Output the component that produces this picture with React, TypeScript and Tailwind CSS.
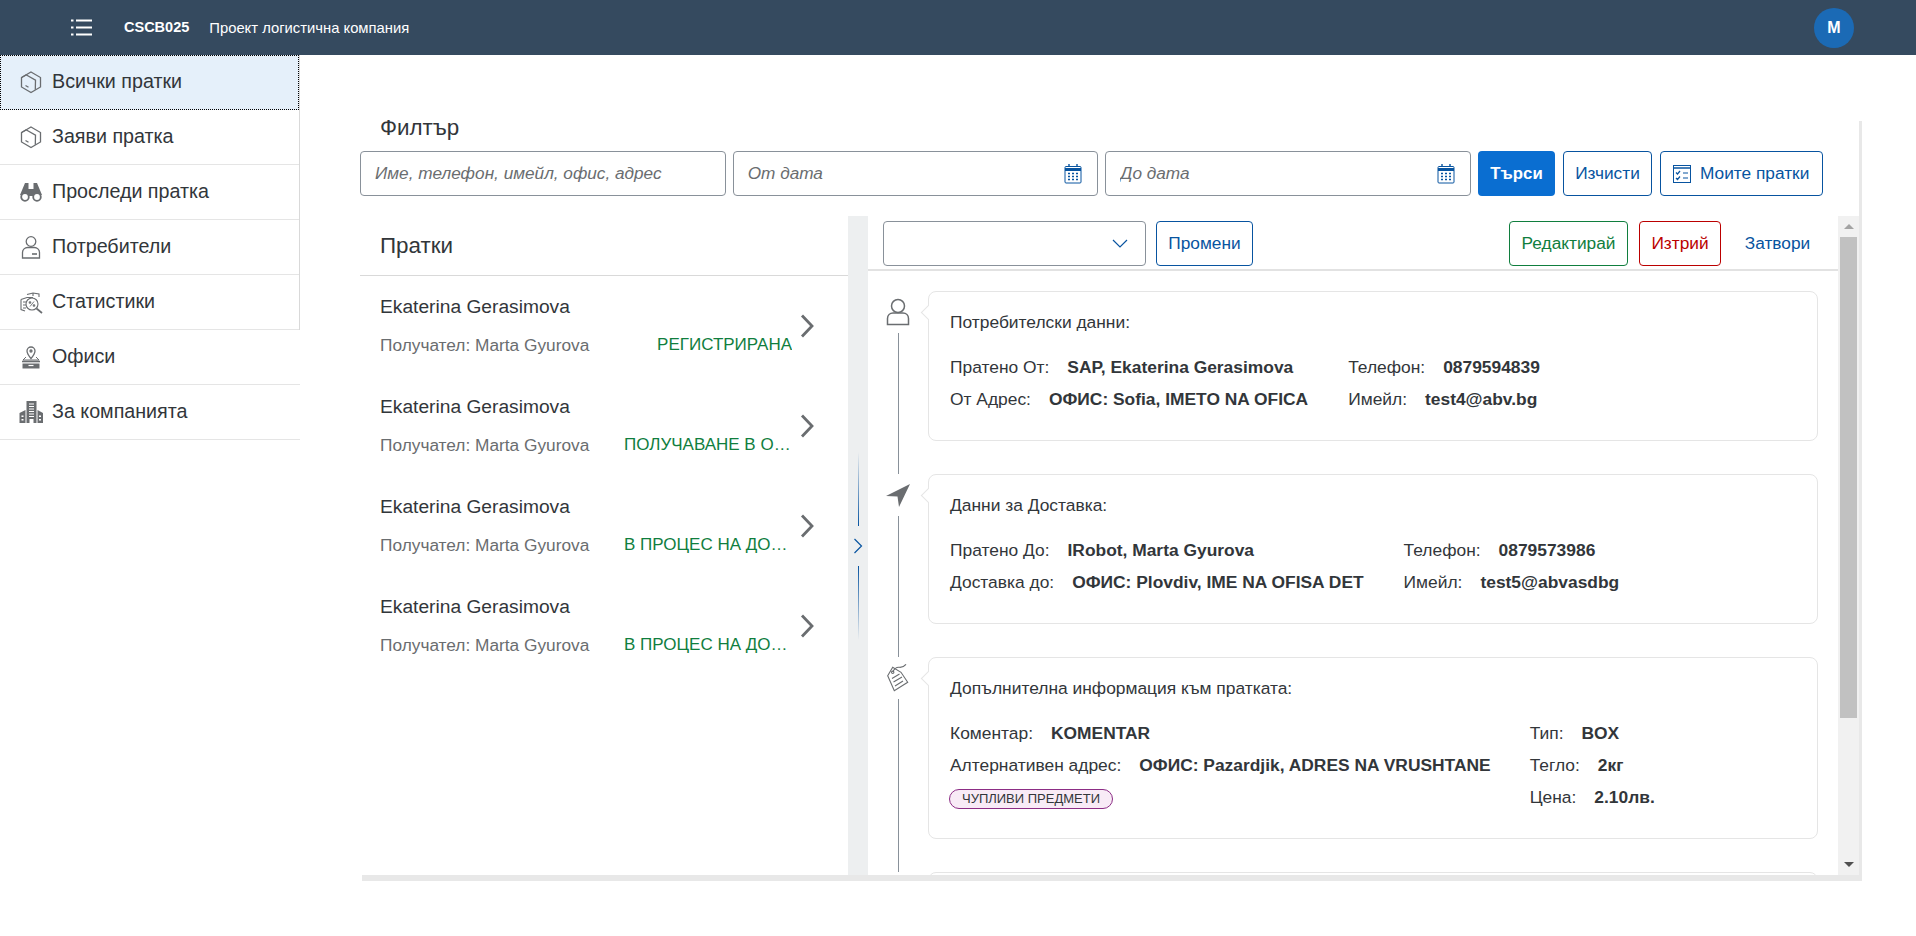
const NAV = [
  { label: "Всички пратки", icon: "box", active: true },
  { label: "Заяви пратка", icon: "box" },
  { label: "Проследи пратка", icon: "binoculars" },
  { label: "Потребители", icon: "user" },
  { label: "Статистики", icon: "stats" },
];
const NAV_BOTTOM = [
  { label: "Офиси", icon: "office" },
  { label: "За компанията", icon: "building" },
];

const SHIPMENTS = [
  "РЕГИСТРИРАНА",
  "ПОЛУЧАВАНЕ В ОФИС",
  "В ПРОЦЕС НА ДОСТАВКА",
  "В ПРОЦЕС НА ДОСТАВКА",
];

function NavIcon({ name }: { name: string }) {
  const common = { width: 24, height: 24, viewBox: "0 0 24 24", className: "shrink-0" };
  if (name === "box") {
    return (
      <svg {...common} fill="none" stroke="#6a6d70" strokeWidth="1.3">
        <path d="M12 2l9.5 5.5v9.5L12 22.5 2.5 17V7.5z" />
        <path d="M7 4.8l9.5 5.4-.2 9.5M2.7 7.5l4.5-2.6M6.5 15.5l3 1.7" />
      </svg>
    );
  }
  if (name === "binoculars") {
    return (
      <svg {...common} fill="#6a6d70">
        <path d="M6 3h3.5v6h5V3H18l5 12H1z" />
        <circle cx="6" cy="17" r="3.8" fill="#fff" stroke="#6a6d70" strokeWidth="1.800" />
        <circle cx="18" cy="17" r="3.8" fill="#fff" stroke="#6a6d70" strokeWidth="1.800" />
        <rect x="10" y="11" width="4" height="5" />
      </svg>
    );
  }
  if (name === "user") {
    return (
      <svg {...common} fill="none" stroke="#6a6d70" strokeWidth="1.3">
        <circle cx="12" cy="6.5" r="4.8" />
        <path d="M3.5 23v-5.5c0-3 2.5-5 5-5h7c2.5 0 5 2 5 5V23z" />
        <path d="M13 19h5" strokeWidth="1.6" />
      </svg>
    );
  }
  if (name === "stats") {
    return (
      <svg {...common} fill="none" stroke="#6a6d70" strokeWidth="1.1">
        <path d="M2 9.5l6-2h6M2 9.5v10l4 1.5M8 4.5l6-1.5 6 1v3M14 3v3" />
        <path d="M4 12h3M4 15h3M4 18h3" />
        <circle cx="13" cy="14" r="6" />
        <path d="M17.5 18.5L23 23" strokeWidth="1.7" />
        <path d="M11 16.5l4-5" strokeWidth="0.9" />
        <circle cx="11" cy="12.5" r="0.8" />
        <circle cx="15" cy="15.5" r="0.8" />
      </svg>
    );
  }
  if (name === "office") {
    return (
      <svg {...common} fill="none" stroke="#6a6d70" strokeWidth="1.3">
        <path d="M12 13.5C9.5 10.5 8 8.5 8 6a4 4 0 018 0c0 2.500-1.500 4.500-4 7.500z" />
        <circle cx="12" cy="6" r="1" />
        <path d="M7 12l-3 3h16l-3-3" strokeWidth="1" />
        <path d="M3 16.500h18" strokeWidth="1.600" />
        <path d="M3.500 18.500h17v5h-17z" fill="#6a6d70" stroke="none" />
        <path d="M9.500 20.500h5" stroke="#fff" strokeWidth="1.200" />
      </svg>
    );
  }
  return (
    <svg {...common} fill="#6a6d70">
      <path d="M7.500 1h10v22h-10zM.500 13l6-3v13h-6zM24 13l-5.500-3v13H24z" />
      <path
        d="M10 4h5M10 6.500h5M10 9h5M10 11.500h5M10 14h5M10 16.500h5"
        stroke="#fff"
        strokeWidth="1"
      />
      <path d="M10.500 19h4v4h-4zM2.500 15.500h2v1.500h-2zM2.500 19h2v1.500h-2zM20 15.500h2v1.500h-2zM20 19h2v1.500h-2z" fill="#fff" />
    </svg>
  );
}

function CalendarIcon() {
  return (
    <svg width="18" height="20" viewBox="0 0 18 20" className="shrink-0" fill="none" stroke="#0854a0">
      <rect x="1" y="2.500" width="16" height="16.500" rx="1" />
      <path d="M1 5.500h16" strokeWidth="3" />
      <path d="M5 0v3M13 0v3" strokeWidth="1.400" />
      <path
        d="M4 9.500h2M8 9.500h2M12 9.500h2M4 12.500h2M8 12.500h2M12 12.500h2M4 15.500h2M8 15.500h2M12 15.500h2"
        strokeWidth="1.600"
      />
    </svg>
  );
}

function Field({ placeholder, calendar }: { placeholder: string; calendar?: boolean }) {
  return (
    <div className="flex h-[45px] flex-1 items-center rounded-[4px] border border-[#89919a] bg-white pl-[14px] pr-[15px]">
      <input
        placeholder={placeholder}
        className="min-w-0 flex-1 bg-transparent text-[17.2px] outline-none placeholder:italic placeholder:text-[#6a6d70]"
      />
      {calendar && <CalendarIcon />}
    </div>
  );
}

function Row({ label, value }: { label: string; value: string }) {
  return (
    <div className="flex h-[24px] items-center gap-[18px] whitespace-nowrap">
      <span>{label}</span>
      <span className="font-bold">{value}</span>
    </div>
  );
}

function TimelineItem({
  icon,
  title,
  height,
  children,
}: {
  icon: React.ReactNode;
  title: string;
  height: string;
  children: React.ReactNode;
}) {
  return (
    <div className="flex shrink-0">
      <div className="flex w-[60px] shrink-0 flex-col items-center">
        <div className="flex h-[42px] w-full items-center justify-center">{icon}</div>
        <div className="w-px flex-1 bg-[#89919a]" />
      </div>
      <div className="mb-[33px] flex-1">
        <div className={`relative rounded-[8px] border border-[#e5e5e5] bg-white pl-[21px] pt-[18px] ${height}`}>
          <span className="absolute left-[-6px] top-[15px] h-[11px] w-[11px] rotate-45 border-b border-l border-[#e5e5e5] bg-white" />
          <div className="h-[24px] leading-[24px]">{title}</div>
          {children}
        </div>
      </div>
    </div>
  );
}

export default function App() {
  return (
    <div className="h-[936px] overflow-hidden bg-white font-['Liberation_Sans',Arial,sans-serif] text-[#32363a]">
      <header className="flex h-[55px] items-center bg-[#354a5f] text-white">
        <svg width="22" height="17" viewBox="0 0 22 17" className="ml-[71px]" fill="#fff">
          <rect x="0" y="0.500" width="2.500" height="2" />
          <rect x="0" y="7.500" width="2.500" height="2" />
          <rect x="0" y="14.500" width="2.500" height="2" />
          <rect x="5" y="0.500" width="16" height="2" />
          <rect x="5" y="7.500" width="16" height="2" />
          <rect x="5" y="14.500" width="16" height="2" />
        </svg>
        <span className="ml-[31px] text-[14.500px] font-bold">CSCB025</span>
        <span className="ml-[20px] pt-[1px] text-[14.800px]">Проект логистична компания</span>
        <div className="ml-auto mr-[62px] flex h-[40px] w-[40px] items-center justify-center rounded-full bg-[#1b6ab5] text-[16px] font-bold">
          M
        </div>
      </header>

      <div className="flex">
        <aside className="w-[300px] shrink-0 text-[19.700px]">
          <div className="border-r border-[#d9d9d9]">
            {NAV.map((item) => (
              <div
                key={item.label}
                className={
                  item.active
                    ? "flex h-[55px] items-center gap-[9px] bg-[#e5f0fa] pb-[2px] pl-[19px] outline outline-1 -outline-offset-1 outline-dotted outline-black"
                    : "flex h-[55px] items-center gap-[9px] border-b border-[#e5e5e5] pl-[19px]"
                }
              >
                <NavIcon name={item.icon} />
                <span>{item.label}</span>
              </div>
            ))}
          </div>
          {NAV_BOTTOM.map((item) => (
            <div key={item.label} className="flex h-[55px] items-center gap-[9px] border-b border-[#e5e5e5] pl-[19px] pr-[1px]">
              <NavIcon name={item.icon} />
              <span>{item.label}</span>
            </div>
          ))}
        </aside>

        <main className="min-w-0 flex-1 pl-[60px] pr-[54px] pt-[66px]">
          <div className="flow-root h-[754px] border-r-[3px] border-[#e8e8e8]">
            <div className="-mt-[6px] h-[26px] pl-[20px] text-[22.400px] leading-[26px]">Филтър</div>
            <div className="mr-[36px] mt-[10px] flex gap-[7px]">
              <Field placeholder="Име, телефон, имейл, офис, адрес" />
              <Field placeholder="От дата" calendar />
              <Field placeholder="До дата" calendar />
              <div className="flex gap-[8px] text-[17.300px]">
                <button className="h-[45px] w-[77px] rounded-[4px] bg-[#0a6ed1] text-[16.800px] font-bold text-white">Търси</button>
                <button className="h-[45px] w-[89px] rounded-[4px] border border-[#0854a0] text-[#0854a0]">Изчисти</button>
                <button className="flex h-[45px] w-[163px] items-center gap-[9px] rounded-[4px] border border-[#0854a0] pl-[12px] text-[#0854a0]">
                  <svg width="18" height="18" viewBox="0 0 18 18" fill="none" stroke="#0854a0">
                    <rect x="0.500" y="0.500" width="17" height="17" />
                    <path d="M0.500 3h17" strokeWidth="1.500" />
                    <path d="M3 7.500l1.500 1.500L7 6M3 13l1.500 1.500L7 11.500M10 8h5M10 13h5" strokeWidth="1.200" />
                  </svg>
                  Моите пратки
                </button>
              </div>
            </div>

            <div className="mt-[20px] flex h-[659px]">
              <section className="w-[488px] shrink-0">
                <div className="flex h-[60px] items-center border-b border-[#d9d9d9] pl-[20px] text-[22.400px]">
                  Пратки
                </div>
                {SHIPMENTS.map((status, i) => (
                  <div key={i} className="flex h-[100px] items-center pl-[20px]">
                    <div className="w-[412px]">
                      <div className="h-[24px] text-[19.200px] leading-[24px]">Ekaterina Gerasimova</div>
                      <div className="mt-[14px] flex h-[24px] items-center justify-between text-[17.300px] leading-[24px] text-[#6a6d70]">
                        <span className="whitespace-nowrap">Получател: Marta Gyurova</span>
                        <span className="w-[168px] truncate text-right text-[17px] text-[#107e3e]">{status}</span>
                      </div>
                    </div>
                    <svg width="14" height="24" viewBox="0 0 14 24" className="ml-[8px] mt-[-1px]" fill="none" stroke="#6a6d70" strokeWidth="2.800">
                      <path d="M2 1.500L12 12 2 22.500" />
                    </svg>
                  </div>
                ))}
              </section>

              <div className="flex w-[20px] shrink-0 flex-col items-center justify-center bg-[#edeff0]">
                <div className="h-[74px] w-px bg-gradient-to-b from-transparent to-[#0854a0]" />
                <svg width="10" height="16" viewBox="0 0 10 16" className="my-[12px]" fill="none" stroke="#0854a0" strokeWidth="1.200">
                  <path d="M1.500 1l7 7-7 7" />
                </svg>
                <div className="h-[74px] w-px bg-gradient-to-b from-[#0854a0] to-transparent" />
              </div>

              <section className="flex min-w-0 flex-1">
                <div className="flex min-w-0 flex-1 flex-col">
                  <div className="flex h-[55px] shrink-0 items-center border-b-2 border-[#e2e2e2] pl-[15px] pr-[15px] pt-[2px] text-[17.300px]">
                    <div className="flex h-[45px] w-[263px] items-center justify-end rounded-[4px] border border-[#89919a] pr-[17px]">
                      <svg width="16" height="9" viewBox="0 0 16 9" fill="none" stroke="#0854a0" strokeWidth="1.200">
                        <path d="M1 1l7 7 7-7" />
                      </svg>
                    </div>
                    <button className="ml-[10px] h-[45px] w-[97px] rounded-[4px] border border-[#0854a0] text-[#0854a0]">Промени</button>
                    <button className="ml-auto h-[45px] w-[119px] rounded-[4px] border border-[#107e3e] text-[#107e3e]">Редактирай</button>
                    <button className="ml-[11px] h-[45px] w-[82px] rounded-[4px] border border-[#bb0000] text-[#bb0000]">Изтрий</button>
                    <button className="ml-[11px] h-[45px] w-[91px] text-[#0854a0]">Затвори</button>
                  </div>

                  <div className="flex min-h-0 flex-1 flex-col overflow-hidden pr-[20px] pt-[20px] text-[17.400px]">
                    <TimelineItem
                      title="Потребителски данни:"
                      height="h-[150px]"
                      icon={
                        <svg width="24" height="28" viewBox="0 0 24 28" fill="none" stroke="#6a6d70" strokeWidth="1.500">
                          <circle cx="12" cy="8" r="6.500" />
                          <path d="M1.500 26.500v-6c0-3.500 2.500-5.500 5.500-5.500h10c3 0 5.500 2 5.500 5.500v6z" />
                        </svg>
                      }
                    >
                      <div className="mt-[21px] flex gap-[40px]">
                        <div className="flex flex-col gap-[8px]">
                          <Row label="Пратено От:" value="SAP, Ekaterina Gerasimova" />
                          <Row label="От Адрес:" value="ОФИС: Sofia, IMETO NA OFICA" />
                        </div>
                        <div className="flex flex-col gap-[8px]">
                          <Row label="Телефон:" value="0879594839" />
                          <Row label="Имейл:" value="test4@abv.bg" />
                        </div>
                      </div>
                    </TimelineItem>

                    <TimelineItem
                      title="Данни за Доставка:"
                      height="h-[150px]"
                      icon={
                        <svg width="24" height="23" viewBox="0 0 24 23" fill="#6a6d70">
                          <path d="M24 0L13 23l-1.500-10.500L0 12z" />
                        </svg>
                      }
                    >
                      <div className="mt-[21px] flex gap-[40px]">
                        <div className="flex flex-col gap-[8px]">
                          <Row label="Пратено До:" value="IRobot, Marta Gyurova" />
                          <Row label="Доставка до:" value="ОФИС: Plovdiv, IME NA OFISA DET" />
                        </div>
                        <div className="flex flex-col gap-[8px]">
                          <Row label="Телефон:" value="0879573986" />
                          <Row label="Имейл:" value="test5@abvasdbg" />
                        </div>
                      </div>
                    </TimelineItem>

                    <TimelineItem
                      title="Допълнителна информация към пратката:"
                      height="h-[182px]"
                      icon={
                        <svg width="22" height="28" viewBox="0 0 22 28" fill="none" stroke="#6a6d70" strokeWidth="1.100">
                          <path d="M5.700 3.300L.7 11.700l6.600 15 13.400-8.400-6.700-10z" />
                          <circle cx="5.700" cy="8.300" r="1.200" />
                          <path d="M5.700 8c2-4 4-5 6.600-4.700 3 .3 5-1 6.700-3" />
                          <path d="M5 14.500l7.500-4.500M6.500 18l8.500-5M8 22l8-5" />
                        </svg>
                      }
                    >
                      <div className="mt-[21px] flex gap-[39px]">
                        <div className="flex flex-col gap-[8px]">
                          <Row label="Коментар:" value="KOMENTAR" />
                          <Row label="Алтернативен адрес:" value="ОФИС: Pazardjik, ADRES NA VRUSHTANE" />
                          <span className="-ml-px mt-[4px] flex h-[20px] w-[164px] items-center justify-center rounded-full border border-[#8c2d85] bg-[#f8ebf6] text-[13px]">
                            ЧУПЛИВИ ПРЕДМЕТИ
                          </span>
                        </div>
                        <div className="flex flex-col gap-[8px]">
                          <Row label="Тип:" value="BOX" />
                          <Row label="Тегло:" value="2кг" />
                          <Row label="Цена:" value="2.10лв." />
                        </div>
                      </div>
                    </TimelineItem>

                    <TimelineItem title="" height="h-[150px]" icon={null}>
                      <div />
                    </TimelineItem>
                  </div>
                </div>

                <div className="flex w-[21px] shrink-0 flex-col items-center bg-[#f1f1f1]">
                  <div className="flex h-[21px] w-full shrink-0 items-center justify-center">
                    <span className="h-0 w-0 border-x-[5px] border-b-[5px] border-x-transparent border-b-[#a3a3a3]" />
                  </div>
                  <div className="h-[481px] w-[17px] bg-[#c1c1c1]" />
                  <div className="mt-auto flex h-[21px] w-full shrink-0 items-center justify-center">
                    <span className="h-0 w-0 border-x-[5px] border-t-[5px] border-x-transparent border-t-[#505050]" />
                  </div>
                </div>
              </section>
            </div>
          </div>
          <div className="ml-[2px] h-[6px] bg-[#e8e8e8]" />
        </main>
      </div>
    </div>
  );
}
